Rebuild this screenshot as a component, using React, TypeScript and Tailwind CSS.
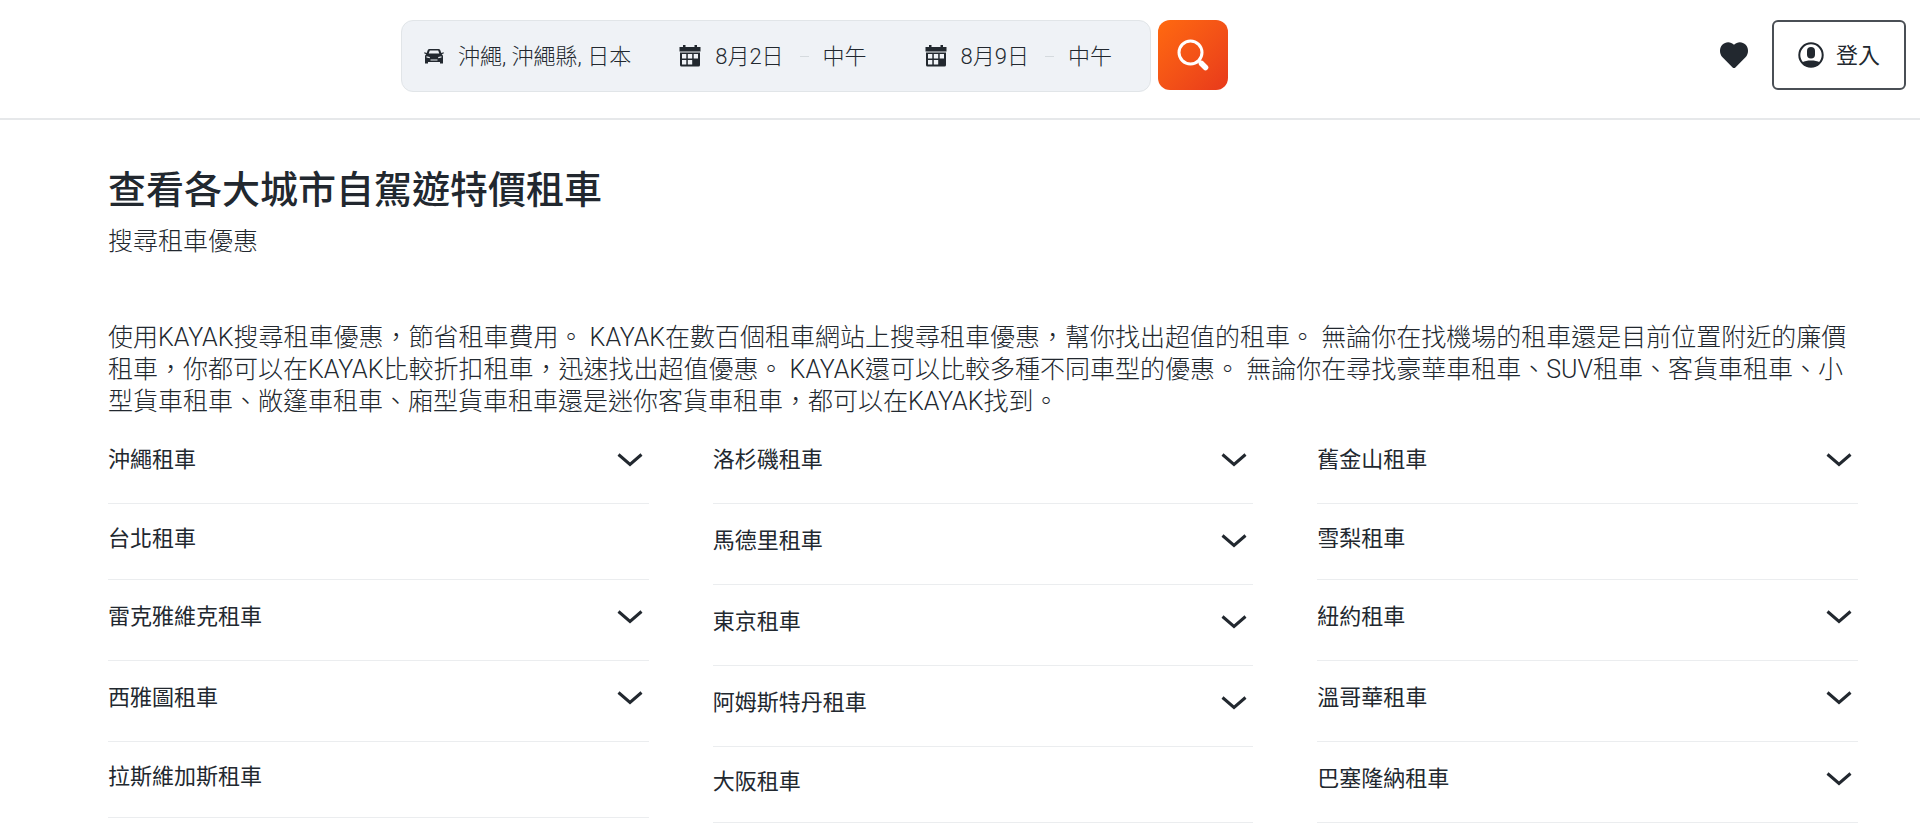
import React from 'react';

type City = { name: string; expandable: boolean };

const columns: City[][] = [
  [
    { name: '沖繩租車', expandable: true },
    { name: '台北租車', expandable: false },
    { name: '雷克雅維克租車', expandable: true },
    { name: '西雅圖租車', expandable: true },
    { name: '拉斯維加斯租車', expandable: false },
  ],
  [
    { name: '洛杉磯租車', expandable: true },
    { name: '馬德里租車', expandable: true },
    { name: '東京租車', expandable: true },
    { name: '阿姆斯特丹租車', expandable: true },
    { name: '大阪租車', expandable: false },
  ],
  [
    { name: '舊金山租車', expandable: true },
    { name: '雪梨租車', expandable: false },
    { name: '紐約租車', expandable: true },
    { name: '溫哥華租車', expandable: true },
    { name: '巴塞隆納租車', expandable: true },
  ],
];

const CarIcon = () => (
  <svg viewBox="0 0 20 16" className="w-5 h-4 shrink-0" fill="currentColor" aria-hidden="true">
    <path
      fillRule="evenodd"
      d="M5.500 1h9c.8 0 1.400.4 1.700 1.100L17.300 5 19.600 4.300l.3 1-2.200.9c1 .6 1.300 1.500 1.300 2.600V15.500h-3V14H4v1.500H1V8.800c0-1.100.3-2 1.300-2.600L.1 5.300l.3-1L2.700 5l1.100-2.900C4.100 1.400 4.700 1 5.500 1zm.3 1.400L4.700 5.600h10.600l-1.100-3.200zM2.500 8.300v1.200l3.300.7V9.100zm15 0-3.300.8v1.100l3.300-.7zM6.500 11.500v1h7v-1z"
    />
  </svg>
);

const CalendarIcon = () => (
  <svg viewBox="0 0 22 22" className="w-[22px] h-[22px] shrink-0" fill="currentColor" aria-hidden="true">
    <path
      fillRule="evenodd"
      d="M4 0h2.500v2h9V0H18v2h3.500v4.500H.5V2H4zM1 7.500h20V20a1.500 1.500 0 0 1-1.500 1.500h-17A1.500 1.500 0 0 1 1 20zM3 9v4.500h4.300V9zm5.800 0v4.500h4.400V9zm5.900 0v4.500H19V9zM3 15v4.500h4.300V15zm5.800 0v4.500h4.400V15z"
    />
  </svg>
);

const SearchIcon = () => (
  <svg viewBox="0 0 32 32" className="w-8 h-8" fill="none" stroke="currentColor" aria-hidden="true">
    <circle cx="13.500" cy="13.500" r="11.500" strokeWidth="3" />
    <path d="M21.500 21.500l3 3" strokeWidth="3" />
    <path d="M24.500 24.500l4 4" strokeWidth="5.500" strokeLinecap="round" />
  </svg>
);

const HeartIcon = () => (
  <svg viewBox="0 0 28 26" className="w-7 h-[26px]" fill="currentColor" aria-hidden="true">
    <path d="M14 26c-.5 0-1-.2-1.400-.6L2.500 15.200C-.8 11.800-.8 6 2.300 2.700 5.500-.6 10.600-.8 14 2.700 17.400-.8 22.500-.6 25.700 2.700c3.100 3.300 3.100 9.100-.2 12.500L15.400 25.400c-.4.4-.9.6-1.400.6z" />
  </svg>
);

const UserIcon = () => (
  <svg viewBox="0 0 26 26" className="w-[26px] h-[26px]" aria-hidden="true">
    <circle cx="13" cy="13" r="11.700" fill="none" stroke="currentColor" strokeWidth="2" />
    <rect x="9" y="5" width="8" height="11.500" rx="4" fill="currentColor" />
    <path d="M4 20.500C6.500 19 9.500 18.500 13 18.500s6.500.5 9 2C19.800 23.500 16.700 25 13 25s-6.800-1.500-9-4.500z" fill="currentColor" />
  </svg>
);

const ChevronIcon = () => (
  <svg viewBox="0 0 26 14" className="w-[26px] h-[14px]" fill="none" stroke="currentColor" strokeWidth="3" aria-hidden="true">
    <path d="M1.500 1.500L13 11.500L24.500 1.500" />
  </svg>
);

const DateField = ({ date, time }: { date: string; time: string }) => (
  <div className="flex items-center">
    <CalendarIcon />
    <button type="button" className="ml-[14px]">{date}</button>
    <span className="ml-4 mr-[14px] h-px w-[9px] bg-[#d5dade]" />
    <button type="button">{time}</button>
  </div>
);

const CityRow = ({ name, expandable }: City) => (
  <li className={`flex items-start justify-between border-b border-[#ebedef] ${expandable ? 'h-[81px] pt-[21px]' : 'h-[76px] pt-[19px]'}`}>
    <a href="#" className="leading-8">{name}</a>
    {expandable && (
      <button type="button" aria-label={name} className="flex h-8 items-center pr-[6px]">
        <ChevronIcon />
      </button>
    )}
  </li>
);

const App: React.FC = () => {
  return (
    <div className="min-h-screen bg-white text-[#22282f] font-['Roboto','Noto_Sans_CJK_TC',sans-serif]" lang="zh-Hant">
      {/* Header */}
      <header className="flex items-start border-b-2 border-[#e6e8ea] pt-5 pb-[26px] pr-[14px] pl-[401px]">
        <form className="flex items-start gap-[7px]" onSubmit={(e) => e.preventDefault()}>
          <div className="flex h-[72px] items-center rounded-xl border border-[#e1e5e8] bg-[#eff2f6] pl-[22px] pr-[38px] text-[22px] font-light whitespace-nowrap">
            <CarIcon />
            <button type="button" className="ml-[14px] mr-12">沖繩, 沖繩縣, 日本</button>
            <DateField date="8月2日" time="中午" />
            <span className="w-[58px]" />
            <DateField date="8月9日" time="中午" />
          </div>
          <button
            type="submit"
            aria-label="搜尋"
            className="flex size-[70px] items-center justify-center rounded-xl bg-gradient-to-br from-[#ff690f] to-[#e8391b] text-white"
          >
            <SearchIcon />
          </button>
        </form>
        <div className="ml-auto flex items-center gap-6">
          <button type="button" aria-label="收藏">
            <HeartIcon />
          </button>
          <button
            type="button"
            className="flex h-[70px] items-center gap-3 rounded-md border-2 border-[#4a4f55] px-6 text-[22px]"
          >
            <UserIcon />
            登入
          </button>
        </div>
      </header>

      {/* City list */}
      <main className="pl-[108px] pr-[62px] pt-11">
        <h1 className="text-[38px] font-medium leading-[52px]">查看各大城市自駕遊特價租車</h1>
        <p className="mt-[10px] text-[25px] font-light leading-8">搜尋租車優惠</p>
        <p className="mt-16 text-[25px] font-light leading-8">
          使用KAYAK搜尋租車優惠，節省租車費用。 KAYAK在數百個租車網站上搜尋租車優惠，幫你找出超值的租車。 無論你在找機場的租車還是目前位置附近的廉價租車，你都可以在KAYAK比較折扣租車，迅速找出超值優惠。 KAYAK還可以比較多種不同車型的優惠。 無論你在尋找豪華車租車、SUV租車、客貨車租車、小型貨車租車、敞篷車租車、廂型貨車租車還是迷你客貨車租車，都可以在KAYAK找到。
        </p>
        <div className="mt-[5px] grid grid-cols-3 gap-16 text-[22px]">
          {columns.map((cities, i) => (
            <ul key={i}>
              {cities.map((city) => (
                <CityRow key={city.name} {...city} />
              ))}
            </ul>
          ))}
        </div>
      </main>
    </div>
  );
};

export default App;
